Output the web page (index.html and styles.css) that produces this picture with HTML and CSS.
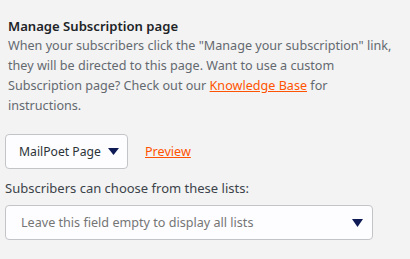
FILE: index.html
```html
<!DOCTYPE html>
<html>
<head>
<meta charset="utf-8">
<link rel="stylesheet" href="styles.css">
</head>
<body>
<div class="panel">
  <div class="intro">
    <h3 class="title">Manage Subscription page</h3>
    <p class="desc">When your subscribers click the "Manage your subscription" link, they will be directed to this page. Want to use a custom Subscription page? Check out our <a class="link" href="#">Knowledge Base</a> for instructions.</p>
  </div>
  <div class="row">
    <div class="select small">
      <span class="value">MailPoet Page</span>
      <svg class="caret" width="11" height="7" viewBox="0 0 11 7"><path d="M0 0H11L5.5 7Z" fill="#0e1a55"/></svg>
    </div>
    <a class="link preview" href="#">Preview</a>
  </div>
  <div class="label">Subscribers can choose from these lists:</div>
  <div class="select wide">
    <span class="placeholder">Leave this field empty to display all lists</span>
    <svg class="caret" width="11" height="8" viewBox="0 0 11 8"><path d="M0 0H11L5.5 8Z" fill="#0e1a55"/></svg>
  </div>
</div>
</body>
</html>
```
FILE: styles.css
```css
html, body {
  margin: 0;
  background: #f3f3f3;
}
body {
  font-family: "Noto Sans", "Open Sans", sans-serif;
  font-size: 12.6px;
  color: #1d2327;
}
.panel {
  padding: 16px 5px 0 5px;
  width: 400px;
}
.intro {
  padding-left: 3px;
}
.title {
  margin: 0;
  font-size: 13.1px;
  font-weight: 600;
  line-height: 20px;
  color: #1d2327;
}
.desc {
  margin: 0;
  max-width: 390px;
  line-height: 20px;
  color: #646970;
}
.link {
  color: #ff5301;
  text-decoration: underline;
}
.row {
  margin-top: 18px;
  display: flex;
  align-items: center;
  gap: 17px;
}
.select {
  box-sizing: border-box;
  height: 35px;
  background: #fdfdff;
  border: 1px solid #c3c4c7;
  border-radius: 4px;
  display: flex;
  align-items: center;
  justify-content: space-between;
  white-space: nowrap;
}
.small {
  width: 123px;
  padding: 0 8px 0 13px;
}
.value {
  font-size: 12.2px;
  color: #2c3338;
}
.label {
  margin-top: 9px;
  font-size: 13px;
  line-height: 20px;
  color: #3c434a;
}
.wide {
  margin-top: 7px;
  width: 368px;
  padding: 0 9px 0 15px;
}
.placeholder {
  color: #757575;
}
.caret {
  display: block;
}
```
